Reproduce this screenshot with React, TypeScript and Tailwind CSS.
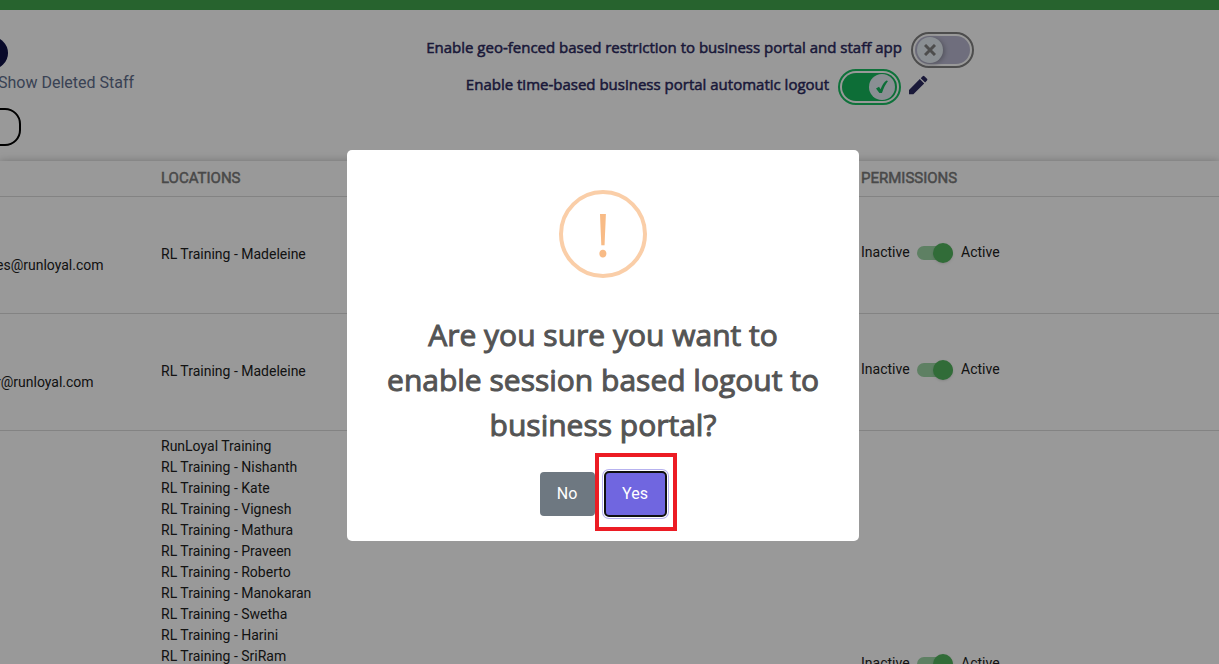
import { useState } from 'react'

interface StaffRow {
    id: number
    email: string
    locations: string[]
}

const staff: StaffRow[] = [
    { id: 1, email: 'es@runloyal.com', locations: ['RL Training - Madeleine'] },
    { id: 2, email: 'r@runloyal.com', locations: ['RL Training - Madeleine'] },
    {
        id: 3,
        email: '',
        locations: [
            'RunLoyal Training',
            'RL Training - Nishanth',
            'RL Training - Kate',
            'RL Training - Vignesh',
            'RL Training - Mathura',
            'RL Training - Praveen',
            'RL Training - Roberto',
            'RL Training - Manokaran',
            'RL Training - Swetha',
            'RL Training - Harini',
            'RL Training - SriRam'
        ]
    }
]

interface ToggleProps {
    id: string
    checked: boolean
    onChange: (checked: boolean) => void
}

function SettingToggle({ id, checked, onChange }: ToggleProps) {
    return (
        <span className={`relative flex h-9 w-[63px] rounded-full border-2 p-0.5 ${checked ? 'border-[#1abf63]' : 'border-[#808080]'}`}>
            <input
                type="checkbox"
                id={id}
                checked={checked}
                onChange={(e) => onChange(e.target.checked)}
                className="h-full w-full appearance-none rounded-full bg-[#b9b8d0] checked:bg-[#17b75d]"
            />
            <span
                className={`pointer-events-none absolute top-[3px] flex h-[26px] w-[26px] items-center justify-center rounded-full bg-[#e7eff5] ${checked ? 'right-[4px]' : 'left-[4px] shadow-[2px_1px_4px_#8f8fa0]'}`}
            >
                {checked ? (
                    <svg viewBox="0 0 12 14" className="h-3.5 w-3" fill="#17b75d">
                        <path d="M0 8.4 L3 6.8 L4.6 9.2 C6 5.2 8 2.2 10.4 0.4 L12 1 C9.4 4.4 7.4 8.4 6 13 L3.4 13 Z" />
                    </svg>
                ) : (
                    <svg viewBox="0 0 12 12" className="h-3 w-3" fill="none" stroke="#808080" strokeWidth="3">
                        <path d="M1 1 L11 11 M11 1 L1 11" />
                    </svg>
                )}
            </span>
        </span>
    )
}

function StatusToggle({ id, checked, onChange }: ToggleProps) {
    return (
        <div className="flex items-center gap-2 pb-1">
            <span className="w-12 pb-0.5">Inactive</span>
            <span className="relative flex h-5 w-9 items-center">
                <input
                    type="checkbox"
                    id={id}
                    checked={checked}
                    onChange={(e) => onChange(e.target.checked)}
                    className="h-3.5 w-9 appearance-none rounded-full bg-gray-400 checked:bg-[#9dd5a6]"
                />
                <span
                    className={`pointer-events-none absolute h-5 w-5 rounded-full shadow ${checked ? 'right-0 bg-[#52b45e]' : 'left-0 bg-white'}`}
                />
            </span>
            <label htmlFor={id} className="pb-0.5">Active</label>
        </div>
    )
}

export default function App() {
    const [geoFence, setGeoFence] = useState(false)
    const [autoLogout, setAutoLogout] = useState(true)
    const [inactive, setInactive] = useState<number[]>([])
    const [isOpen, setIsOpen] = useState(true)

    const setActive = (id: number, active: boolean) => {
        setInactive(active ? inactive.filter((i) => i !== id) : [...inactive, id])
    }

    return (
        <div className="h-screen overflow-hidden bg-white font-['Roboto',sans-serif] text-sm text-[#212121]">
            <div className="h-2.5 bg-[#42a54e]" />

            {/* Toolbar */}
            <header className="grid grid-cols-[181px_1fr] pb-[15px]">
                <div className="pt-[27px]">
                    <button type="button" aria-label="Add staff" className="-ml-6 block h-8 w-8 rounded-full bg-[#0f1147]" />
                    <a href="#deleted" className="-ml-0.5 mt-0.5 block text-base text-[#616e8c]">
                        Show Deleted Staff
                    </a>
                    <input
                        type="text"
                        aria-label="Search staff"
                        className="-ml-10 mt-[13px] block h-[38px] w-[61px] rounded-2xl border-2 border-black bg-white"
                    />
                </div>
                <div className="flex flex-col items-center gap-px pt-[22px] font-['Open_Sans',sans-serif] text-[15px] text-[#2c2a60]">
                    <div className="flex items-center gap-[9px]">
                        <label htmlFor="geo-fence" className="pb-1 [-webkit-text-stroke:0.5px]">
                            Enable geo-fenced based restriction to business portal and staff app
                        </label>
                        <SettingToggle id="geo-fence" checked={geoFence} onChange={setGeoFence} />
                    </div>
                    <div className="flex items-center gap-[9px] pr-1">
                        <label htmlFor="auto-logout" className="pb-1 [-webkit-text-stroke:0.5px]">
                            Enable time-based business portal automatic logout
                        </label>
                        <SettingToggle id="auto-logout" checked={autoLogout} onChange={setAutoLogout} />
                        <button type="button" aria-label="Edit logout time" className="-ml-1 pb-1">
                            <svg viewBox="0 0 24 24" className="h-6 w-6" fill="currentColor">
                                <path d="M3 16.9 V21.3 H7.4 L18.2 10.5 L13.8 6.1 Z M21 7.5 a1.2 1.2 0 0 0 0-1.7 L18.4 3.2 a1.2 1.2 0 0 0-1.7 0 L14.7 5.2 L19.1 9.6 Z" />
                            </svg>
                        </button>
                    </div>
                </div>
            </header>

            {/* Staff table */}
            <table className="w-full table-fixed border-collapse shadow-[0_0_8px_rgba(0,0,0,0.25)]">
                <thead>
                    <tr className="h-[35px] border-b border-[#dadada] text-left text-[15px] leading-5 text-[#7a7a7a] [-webkit-text-stroke:0.5px]">
                        <th className="w-[161px]" />
                        <th className="w-[700px] font-normal">LOCATIONS</th>
                        <th className="font-normal">PERMISSIONS</th>
                    </tr>
                </thead>
                <tbody>
                    {staff.map((row) => (
                        <tr key={row.id} className="h-[117px] border-b border-[#dadada]">
                            <td>
                                <div className="-ml-1 pt-5">{row.email}</div>
                            </td>
                            <td className={row.locations.length > 1 ? 'h-[472px] pt-[5px] align-top' : ''}>
                                {row.locations.map((location) => (
                                    <div key={location} className="leading-[21px]">{location}</div>
                                ))}
                            </td>
                            <td>
                                <StatusToggle
                                    id={`status-${row.id}`}
                                    checked={!inactive.includes(row.id)}
                                    onChange={(active) => setActive(row.id, active)}
                                />
                            </td>
                        </tr>
                    ))}
                </tbody>
            </table>

            {/* Confirm dialog */}
            {isOpen && (
                <div className="fixed inset-0 flex items-center justify-center bg-black/40 pr-[13px] pt-[27px]">
                    <div
                        role="alertdialog"
                        aria-labelledby="confirm-title"
                        className="flex w-full max-w-[512px] flex-col items-center rounded-[5px] bg-white px-5 pb-6 pt-10"
                    >
                        <div className="flex h-[88px] w-[88px] items-center justify-center rounded-full border-4 border-[#facea8] font-['Open_Sans',sans-serif] text-6xl text-[#f8bb86]">
                            !
                        </div>
                        <h2
                            id="confirm-title"
                            className="mt-[34px] px-4 text-center font-['Open_Sans',sans-serif] text-[30px] leading-[45px] text-[#545454] [-webkit-text-stroke:1px]"
                        >
                            Are you sure you want to enable session based logout to business portal?
                        </h2>
                        <div className="mt-6 flex items-center gap-[9px] text-base text-white">
                            <button
                                type="button"
                                onClick={() => setIsOpen(false)}
                                className="h-11 w-[55px] rounded bg-[#6e7881]"
                            >
                                No
                            </button>
                            <div className="relative">
                                <button
                                    type="button"
                                    onClick={() => setIsOpen(false)}
                                    className="block h-[46px] w-[63px] rounded-[5px] border-2 border-[#101010] bg-[#7066e0] shadow-[0_0_0_1px_#ffffff,0_0_0_2px_#b7b2ef]"
                                >
                                    Yes
                                </button>
                                <span className="pointer-events-none absolute -bottom-[14px] -left-[9px] -right-[10px] -top-[18px] border-4 border-[#ec1c24]" />
                            </div>
                        </div>
                    </div>
                </div>
            )}
        </div>
    )
}
